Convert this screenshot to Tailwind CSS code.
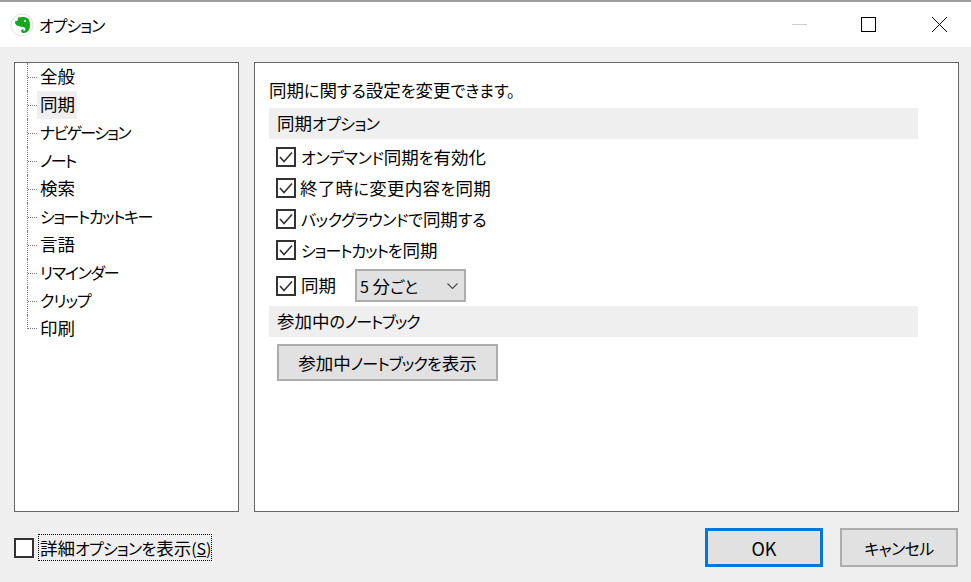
<!DOCTYPE html>
<html lang="ja">
<head>
<meta charset="utf-8">
<script src="https://cdn.jsdelivr.net/npm/@tailwindcss/browser@4"></script>
<title>オプション</title>
</head>
<body class="m-0 overflow-hidden">
<div class="w-[971px] h-[582px] flex flex-col bg-[#efefef] text-[16px] leading-[24px] text-black [font-family:'Noto_Sans_CJK_JP','Noto_Sans',sans-serif] [font-feature-settings:'palt']">
  <header class="h-[47px] shrink-0 bg-white border-t-2 border-[#a0a0a0] flex items-center">
    <svg class="ml-[10px] w-[24px] h-[24px]" viewBox="0 0 24 24">
      <circle cx="12" cy="12" r="11" fill="#fff" stroke="#e2e2e2"/>
      <path d="M8 4.5C11 3.5 17 3.5 18.5 6C20.5 9.5 20.5 14 19 17C17.5 19.5 14.5 20.5 12.5 19.8C10.5 19 10.8 16.3 12.8 16.2C14 16.2 14.2 17.5 13.3 17.9C15 18.2 16 16.5 15 15C14 13.5 11.5 14 10 13.5C8 13 5 12.5 5 9C5 8.2 5.5 8 6.5 8C7.5 8 8 7 8 4.5Z" fill="#14a81e"/>
      <circle cx="15" cy="8" r="0.9" fill="#fff"/>
    </svg>
    <span class="ml-[5px] tracking-[-1px]">オプション</span>
    <div class="ml-auto flex items-center mr-[24px]">
      <div class="w-[15px] h-px bg-[#cccccc]"></div>
      <div class="ml-[54px] w-[15px] h-[15px] border-[1.5px] border-black"></div>
      <svg class="ml-[56px] w-[15px] h-[15px]" viewBox="0 0 15 15"><path d="M0 0L15 15M15 0L0 15" stroke="#000" stroke-width="1" fill="none"/></svg>
    </div>
  </header>
  <main class="flex gap-[15px] pl-[14px] pr-[12px] pt-[15px] h-[465px] shrink-0">
    <nav class="w-[225px] h-[450px] shrink-0 bg-white border border-[#666] pl-[12px]">
      <div class="h-[28px] flex items-center border-l border-dotted border-[#777]"><span class="w-[9px] border-t border-dotted border-[#777]"></span><span class="ml-[3px] pb-[2px] text-[17.5px]">全般</span></div>
      <div class="h-[28px] flex items-center border-l border-dotted border-[#777]"><span class="w-[9px] border-t border-dotted border-[#777]"></span><span class="pl-[3px] pr-[2px] h-[28px] leading-[26px] bg-[#efefef] text-[17.5px]">同期</span></div>
      <div class="h-[28px] flex items-center border-l border-dotted border-[#777]"><span class="w-[9px] border-t border-dotted border-[#777]"></span><span class="ml-[3px] pb-[2px] tracking-[-1.7px]">ナビゲーション</span></div>
      <div class="h-[28px] flex items-center border-l border-dotted border-[#777]"><span class="w-[9px] border-t border-dotted border-[#777]"></span><span class="ml-[3px] pb-[2px] tracking-[-1.7px]">ノート</span></div>
      <div class="h-[28px] flex items-center border-l border-dotted border-[#777]"><span class="w-[9px] border-t border-dotted border-[#777]"></span><span class="ml-[3px] pb-[2px] text-[17.5px]">検索</span></div>
      <div class="h-[28px] flex items-center border-l border-dotted border-[#777]"><span class="w-[9px] border-t border-dotted border-[#777]"></span><span class="ml-[3px] pb-[2px] tracking-[-1.5px]">ショートカットキー</span></div>
      <div class="h-[28px] flex items-center border-l border-dotted border-[#777]"><span class="w-[9px] border-t border-dotted border-[#777]"></span><span class="ml-[3px] pb-[2px] text-[17.5px]">言語</span></div>
      <div class="h-[28px] flex items-center border-l border-dotted border-[#777]"><span class="w-[9px] border-t border-dotted border-[#777]"></span><span class="ml-[3px] pb-[2px] tracking-[-1.3px]">リマインダー</span></div>
      <div class="h-[28px] flex items-center border-l border-dotted border-[#777]"><span class="w-[9px] border-t border-dotted border-[#777]"></span><span class="ml-[3px] pb-[2px] tracking-[-1px]">クリップ</span></div>
      <div class="h-[28px] flex items-center"><span class="w-[10px] h-[14px] self-start border-l border-b border-dotted border-[#777]"></span><span class="ml-[3px] pb-[2px] text-[17.5px]">印刷</span></div>
    </nav>
    <section class="w-[705px] h-[450px] shrink-0 bg-white border border-[#666] pl-[14px] pt-[15px]">
      <p class="h-[24px] whitespace-nowrap"><span class="text-[17.5px]">同期</span>に<span class="text-[17.5px]">関</span>する<span class="text-[17.5px]">設定</span>を<span class="text-[17.5px]">変更</span>できます。</p>
      <h2 class="mt-[6px] w-[649px] h-[31px] bg-[#efefef] pl-[8px] leading-[29px] font-normal"><span class="text-[17.5px]">同期</span><span class="tracking-[-0.6px]">オプション</span></h2>
      <div class="pl-[7px] mt-[3px] flex flex-col gap-[1px]">
        <label class="h-[30px] flex items-center gap-[5px]"><span class="w-[20px] h-[20px] border-2 border-[#333] bg-white flex items-center justify-center"><svg class="w-[16px] h-[16px]" viewBox="0 0 16 16"><path d="M2 8L6 12.5L14 3.5" stroke="#333" stroke-width="1.6" fill="none"/></svg></span><span class="whitespace-nowrap"><span class="tracking-[-0.4px]">オンデマンド</span><span class="text-[17.5px]">同期</span>を<span class="text-[17.5px]">有効化</span></span></label>
        <label class="h-[30px] flex items-center gap-[4px]"><span class="w-[20px] h-[20px] border-2 border-[#333] bg-white flex items-center justify-center"><svg class="w-[16px] h-[16px]" viewBox="0 0 16 16"><path d="M2 8L6 12.5L14 3.5" stroke="#333" stroke-width="1.6" fill="none"/></svg></span><span class="whitespace-nowrap tracking-[0.3px]"><span class="text-[17.5px]">終了時</span>に<span class="text-[17.5px]">変更内容</span>を<span class="text-[17.5px]">同期</span></span></label>
        <label class="h-[30px] flex items-center gap-[5px]"><span class="w-[20px] h-[20px] border-2 border-[#333] bg-white flex items-center justify-center"><svg class="w-[16px] h-[16px]" viewBox="0 0 16 16"><path d="M2 8L6 12.5L14 3.5" stroke="#333" stroke-width="1.6" fill="none"/></svg></span><span class="whitespace-nowrap"><span class="tracking-[-0.5px]">バックグラウンド</span>で<span class="text-[17.5px]">同期</span>する</span></label>
        <label class="h-[30px] flex items-center gap-[5px]"><span class="w-[20px] h-[20px] border-2 border-[#333] bg-white flex items-center justify-center"><svg class="w-[16px] h-[16px]" viewBox="0 0 16 16"><path d="M2 8L6 12.5L14 3.5" stroke="#333" stroke-width="1.6" fill="none"/></svg></span><span class="whitespace-nowrap"><span class="tracking-[-1.1px]">ショートカット</span>を<span class="text-[17.5px]">同期</span></span></label>
        <div class="h-[33px] mt-[3px] flex items-center">
          <label class="w-[79px] flex items-center gap-[5px]"><span class="w-[20px] h-[20px] border-2 border-[#333] bg-white flex items-center justify-center"><svg class="w-[16px] h-[16px]" viewBox="0 0 16 16"><path d="M2 8L6 12.5L14 3.5" stroke="#333" stroke-width="1.6" fill="none"/></svg></span><span class="text-[17.5px] pb-[2px]">同期</span></label>
          <div class="w-[111px] h-[33px] bg-[#e1e1e1] border-2 border-[#adadad] flex items-center pl-[3px] pr-[6px]">
            <span class="whitespace-nowrap">5 <span class="text-[17.5px]">分</span>ごと</span>
            <svg class="ml-auto w-[11px] h-[6px]" viewBox="0 0 11 6"><path d="M0.5 0.5L5.5 5.5L10.5 0.5" stroke="#444" stroke-width="1.1" fill="none"/></svg>
          </div>
        </div>
      </div>
      <h2 class="mt-[4px] w-[649px] h-[31px] bg-[#efefef] pl-[8px] leading-[29px] font-normal whitespace-nowrap"><span class="text-[17.5px]">参加中</span>の<span class="tracking-[-1.2px]">ノートブック</span></h2>
      <button class="block ml-[8px] mt-[7px] w-[221px] h-[37px] bg-[#e1e1e1] border-2 border-[#adadad] text-center whitespace-nowrap"><span class="text-[17.5px]">参加中</span><span class="tracking-[-0.9px]">ノートブック</span>を<span class="text-[17.5px]">表示</span></button>
    </section>
  </main>
  <footer class="flex-1 flex items-start pl-[14px] pr-[13px]">
    <label class="mt-[22px] h-[27px] flex items-center">
      <span class="w-[20px] h-[20px] border-2 border-[#333] bg-white"></span>
      <span class="ml-[4px] w-[174px] h-[27px] border border-dotted border-black pl-[1px] leading-[25px] whitespace-nowrap"><span class="text-[17.5px]">詳細</span><span class="tracking-[-0.8px]">オプション</span>を<span class="text-[17.5px]">表示</span>(<span class="underline">S</span>)</span>
    </label>
    <button class="ml-auto mt-[16px] w-[118px] h-[39px] bg-[#e1e1e1] border-[3px] border-[#0078d7] text-[18px]">OK</button>
    <button class="ml-[17px] mt-[16px] w-[118px] h-[39px] bg-[#e1e1e1] border-2 border-[#adadad] tracking-[-0.6px]">キャンセル</button>
  </footer>
</div>
</body>
</html>
